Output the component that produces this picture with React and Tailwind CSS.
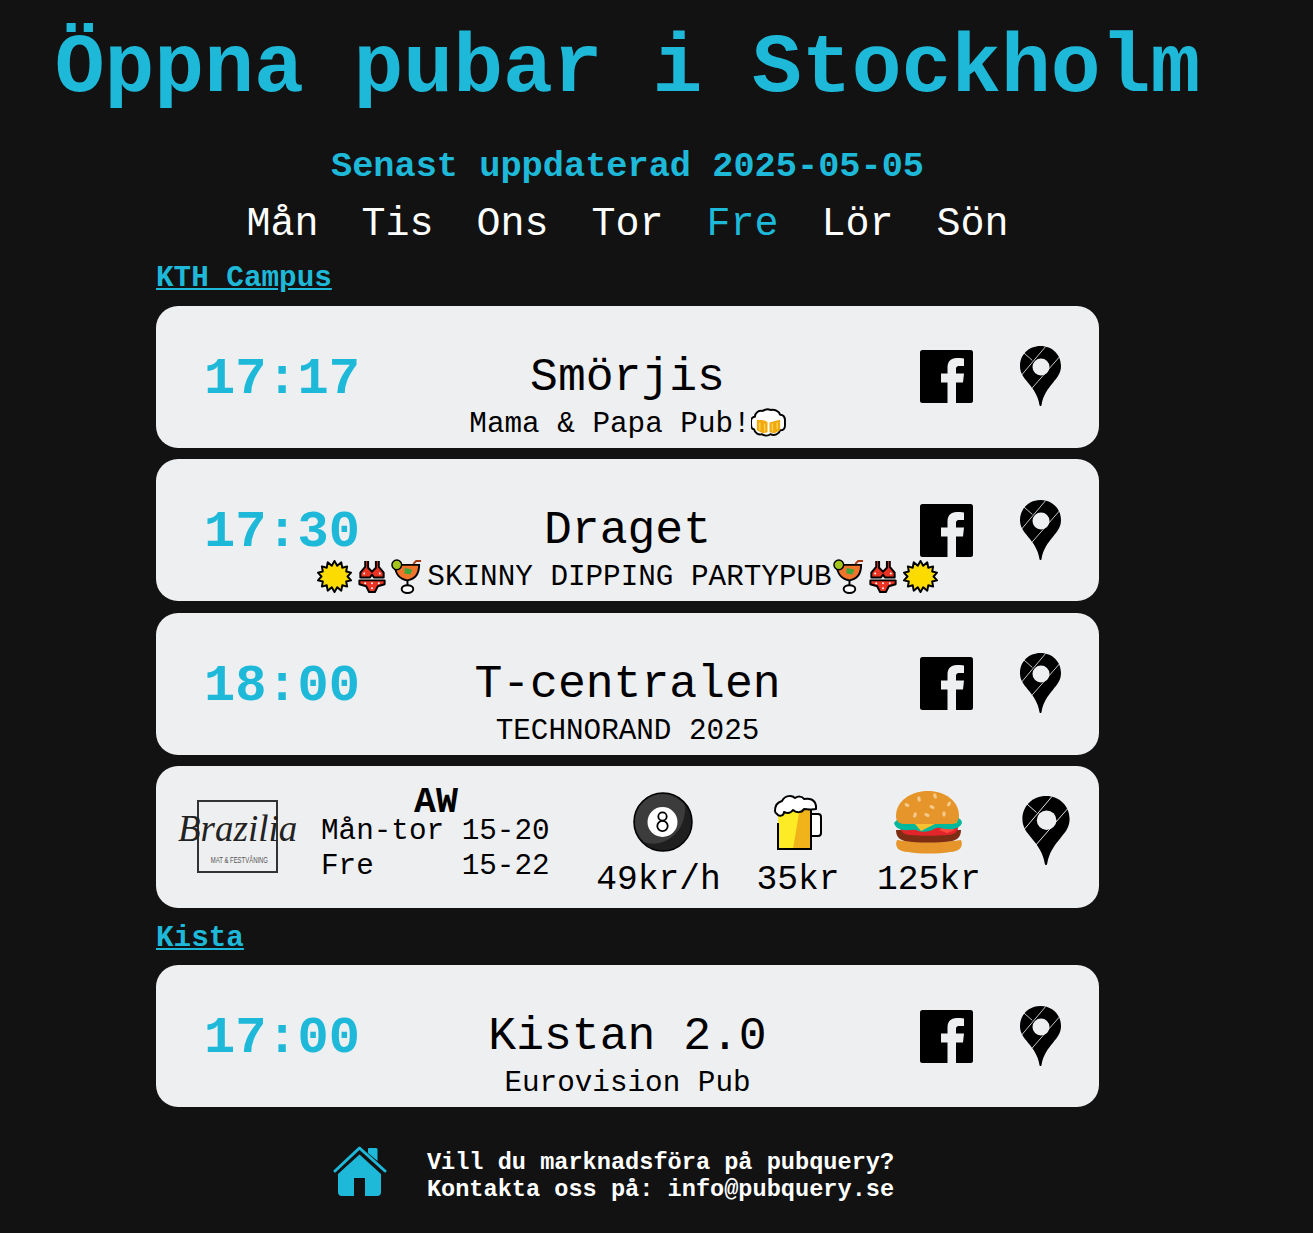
const mono = "font-['Courier_New','Nimbus_Mono_PS','FreeMono','Liberation_Mono',monospace]";

const days = ["Mån", "Tis", "Ons", "Tor", "Fre", "Lör", "Sön"];

const Sun = () => (
  <svg viewBox="0 0 36 36" className="w-[35px] h-[35px] shrink-0 -mt-[4px]">
    <polygon
      points="18,2 20.8,7 25,3.4 26,9 31,7.6 30,12.8 35,14 31.4,18 35,22 30,23.2 31,28.4 26,27 25,32.6 20.8,29 18,34 15.2,29 11,32.6 10,27 5,28.4 6,23.2 1,22 4.6,18 1,14 6,12.8 5,7.6 10,9 11,3.4 15.2,7"
      fill="#fcdc00"
      stroke="#000"
      strokeWidth="2"
      strokeLinejoin="round"
    />
  </svg>
);

const Bikini = () => (
  <svg viewBox="0 0 30 36" className="w-[30px] h-[35px] shrink-0 -mt-[4px]">
    <path d="M8 2v6L3 14v5h10l2-3 2 3h10v-5l-5-6V2" fill="#ea3323" stroke="#000" strokeWidth="2" strokeLinejoin="round" />
    <path d="M11 2v7l4 4 4-4V2" fill="#eeeff1" stroke="#000" strokeWidth="2" />
    <path d="M2 22h26v4l-7 2-3 6h-6l-3-6-7-2z" fill="#ea3323" stroke="#000" strokeWidth="2" strokeLinejoin="round" />
    <g fill="#fff">
      <circle cx="7" cy="15" r="1" />
      <circle cx="23" cy="15" r="1" />
      <circle cx="8" cy="25" r="1" />
      <circle cx="15" cy="25" r="1" />
      <circle cx="22" cy="25" r="1" />
      <circle cx="15" cy="30" r="1" />
    </g>
  </svg>
);

const Cocktail = () => (
  <svg viewBox="0 0 34 36" className="w-[33px] h-[35px] shrink-0 -mt-[4px]">
    <path d="M5 6h25c0 10-5 15-12 16C11 21 5 16 5 6z" fill="#f1742b" stroke="#000" strokeWidth="2" />
    <path d="M15 9l8 2-2 5-6-1z" fill="#3ca63a" />
    <circle cx="7" cy="6" r="5" fill="#a4c61c" stroke="#000" strokeWidth="1.5" />
    <path d="M24 5l3-3h5" fill="none" stroke="#a63a12" strokeWidth="2" />
    <path d="M18 22v6" stroke="#000" strokeWidth="2" />
    <ellipse cx="18" cy="31" rx="6" ry="4" fill="#fff" stroke="#000" strokeWidth="2" />
  </svg>
);

const Beers = () => (
  <svg viewBox="0 0 36 32" className="w-[35px] h-[31px] shrink-0 -mt-[3px]">
    <path d="M4 9c0-4 4-7 8-6 3-2 6-2 8-1 4-1 9 1 10 5 3 0 5 2 5 6v5c0 3-2 5-5 5-1 4-6 6-10 4-2 2-6 2-9 0-3 1-7-1-8-5-3 0-3-3-3-6v-3c0-2 2-4 4-4z" fill="#fff" stroke="#000" strokeWidth="2" strokeLinejoin="round" />
    <path d="M6 12c3 1 5 0 7 1 2 0 3 1 4 2v10l-5 1-6-3z" fill="#f1a90f" />
    <path d="M19 15c3-1 6-2 11-3v11l-6 3-5-1z" fill="#f1a90f" />
    <path d="M9 15v8M14 16v8M22 16v8M27 15v7" stroke="#fcd34d" strokeWidth="1.500" />
  </svg>
);

const Pin = ({ className }) => (
  <svg viewBox="1 1 40 58.500" className={className}>
    <path d="M21 1C9.500 1 1 9.500 1 20.500c0 7 3.500 11 8 16.500 5 6 9.500 12 11 21.500.3 1.500 1.700 1.500 2 0C23.500 49 28 43 33 37c4.500-5.500 8-9.500 8-16.500C41 9.500 32.500 1 21 1z" fill="#000" />
    <circle cx="21.500" cy="21.500" r="8.300" fill="#eeeff1" />
    <path d="M2 30L26 1.500M12 43L40 11M4.500 7.500l8.500 7.500" stroke="#eeeff1" strokeWidth="0.800" fill="none" />
  </svg>
);

const FacebookSquare = () => (
  <svg viewBox="0 0 53 53" className="w-[53px] h-[53px]">
    <rect width="53" height="53" rx="2.500" fill="#000" />
    <path d="M27.500 53V32.500H21v-9h6.500v-6c0-6 3.500-9.500 9-9.500 2.500 0 5 .2 7.500.4v7.600h-4.500c-3 0-3.500 1.500-3.500 3.500v4h8l-1 9h-7V53z" fill="#eeeff1" />
  </svg>
);

const EightBall = () => (
  <svg viewBox="0 0 60 60" className="w-[60px] h-[60px]">
    <circle cx="30" cy="30" r="29" fill="#1f1f1f" stroke="#000" strokeWidth="1.500" />
    <path d="M30 2C15 2 2 14 2 30c0 8 4 15 9 20 19 7 41-9 41-33 0-2 0-3-1-5C45 6 38 2 30 2z" fill="#3c3c3c" />
    <circle cx="29.500" cy="30" r="15" fill="#fff" />
    <circle cx="29.500" cy="24.500" r="4.200" fill="none" stroke="#000" strokeWidth="1.800" />
    <circle cx="29.500" cy="34" r="5.200" fill="none" stroke="#000" strokeWidth="1.800" />
  </svg>
);

const Beer = () => (
  <svg viewBox="0 0 50 58" className="w-[52px] h-[58px]">
    <path d="M38 21h7c2 0 3 1 3 3v16c0 2-1 3-3 3h-7" fill="#fff" stroke="#000" strokeWidth="2" />
    <path d="M5 14h33v42H5z" fill="#fdeb25" />
    <path d="M27 14h11v42H20z" fill="#f0b41a" />
    <path d="M5 30v26h33V14" fill="none" stroke="#000" strokeWidth="2" />
    <path d="M2 18c0-7 3-9 7-10 3-6 10-6 13-3 3-2 7-2 9 1 5-1 11 0 12 7v3c-5 1-9 0-12 0-2 4-8 4-11 1-3 4-7 3-9 2 0 4-5 5-7 2-2-1-2-2-2-3z" fill="#fff" stroke="#000" strokeWidth="2" strokeLinejoin="round" />
  </svg>
);

const Burger = () => (
  <svg viewBox="0 0 70 64" className="w-[70px] h-[64px]">
    <path d="M2 50c10 2 54 2 64 0 3 7-2 12-11 12-12 2-30 2-42 0C4 62-1 57 2 50z" fill="#e5952a" transform="translate(1 0)" />
    <path d="M2 40h65c0 7-4 10-9 11-14 2-34 2-47 0-5-1-9-4-9-11z" fill="#7c2d14" />
    <path d="M6 36h58c1 5-4 9-10 9-12 1-28 1-38 0-6 0-10-4-10-9z" fill="#e1252b" />
    <path d="M45 40l6-4 10 4-8 3z" fill="#ff4a3d" />
    <path d="M0 33c3-4 6-6 10-6h50c5 0 8 3 8 6-2 5-8 7-14 6-6 0-10-3-14 0-5 3-12 4-18 1-4-1-8 1-12 0-5 0-9-3-10-7z" fill="#00b89c" />
    <path d="M9 28h52l2 5-9 1-11-1-16 8-6-7z" fill="#fbc02d" />
    <path d="M2 26C2 11 17 1 34 1s31 10 31 25c0 6-4 8-8 8H10c-4 0-8-2-8-8z" fill="#e5952a" />
    <g fill="#f4c98a">
      <ellipse cx="25" cy="9" rx="1.700" ry="2.700" transform="rotate(-15 25 9)" />
      <ellipse cx="41" cy="6" rx="1.700" ry="2.700" transform="rotate(-20 41 6)" />
      <ellipse cx="13" cy="15" rx="2.700" ry="1.700" transform="rotate(30 13 15)" />
      <ellipse cx="38" cy="17" rx="2.700" ry="1.700" transform="rotate(25 38 17)" />
      <ellipse cx="55" cy="14" rx="1.700" ry="2.700" transform="rotate(30 55 14)" />
      <ellipse cx="21" cy="25" rx="1.700" ry="2.700" transform="rotate(20 21 25)" />
      <ellipse cx="33" cy="25" rx="2.700" ry="1.700" transform="rotate(20 33 25)" />
      <ellipse cx="50" cy="24" rx="1.700" ry="2.700" />
    </g>
  </svg>
);

const Home = () => (
  <svg viewBox="0 0 54 50" className="w-[54px] h-[50px]">
    <path d="M36 2h7a1.500 1.500 0 0 1 1.500 1.500V15L35 7V3a1 1 0 0 1 1-1z" fill="#1eb9d9" />
    <path d="M2 25L26.500 2 52 25" fill="none" stroke="#1eb9d9" strokeWidth="3" strokeLinecap="round" strokeLinejoin="round" />
    <path d="M26.500 8.500L5 28v18a4 4 0 0 0 4 4h12V32h11v18h12a4 4 0 0 0 4-4V28z" fill="#1eb9d9" />
  </svg>
);

const PubCard = ({ time, name, children }) => (
  <div className="grid grid-cols-[268px_minmax(0,1fr)_268px] items-center w-[943px] h-[142px] mb-[11.500px] bg-[#eeeff1] rounded-[22px] text-black">
    <div className="pl-12 pt-[6px] text-[52px] leading-none font-bold text-[#1eb9d9]">{time}</div>
    <div className="flex flex-col items-center pt-[40px]">
      <div className="text-[46.400px] leading-[52px] whitespace-pre">{name}</div>
      <div className="flex items-center justify-center h-[34px] mt-[4px] text-[29.300px] leading-[34px] whitespace-pre">{children}</div>
    </div>
    <div className="flex items-center justify-end gap-[47px] pr-[38px]">
      <FacebookSquare />
      <Pin className="w-[41px] h-[60px] -mt-[1px]" />
    </div>
  </div>
);

const Section = ({ children }) => (
  <a className="self-start text-[29.300px] leading-[33px] font-bold underline text-[#1eb9d9] mb-[11px]">{children}</a>
);

const Price = ({ icon, label, className }) => (
  <div className={`flex flex-col items-center pt-[16px] ${className}`}>
    <div className="h-[64px] flex items-center">{icon}</div>
    <div className="mt-[6px] text-[34.600px] leading-[40px] whitespace-pre">{label}</div>
  </div>
);

export default function App() {
  return (
    <div className={`${mono} min-h-[1233px] bg-[#121212] text-white`}>
      <div className="flex flex-col items-center w-[1255px]">
        <h1 className="text-[83px] leading-[94px] font-bold text-[#1eb9d9] mt-[22px] whitespace-pre">Öppna pubar i Stockholm</h1>
        <div className="text-[35.300px] leading-[40px] font-bold text-[#1eb9d9] mt-[31px]">Senast uppdaterad 2025-05-05</div>
        <div className="flex gap-[43px] text-[40px] leading-[45px] mt-[15px]">
          {days.map((d) => (
            <span key={d} className={d === "Fre" ? "text-[#1eb9d9]" : ""}>{d}</span>
          ))}
        </div>
        <div className="flex flex-col w-[943px] mt-[14.600px]">
          <Section>KTH Campus</Section>
          <PubCard time="17:17" name="Smörjis">
            Mama &amp; Papa Pub!<Beers />
          </PubCard>
          <PubCard time="17:30" name="Draget">
            <Sun />
            <span className="w-[5px]" />
            <Bikini />
            <span className="w-[3px]" />
            <Cocktail />
            <span className="ml-1">SKINNY DIPPING PARTYPUB</span>
            <Cocktail />
            <span className="w-[3px]" />
            <Bikini />
            <span className="w-[5px]" />
            <Sun />
          </PubCard>
          <PubCard time="18:00" name="T-centralen">TECHNORAND 2025</PubCard>

          <div className="flex items-center w-[943px] h-[142px] mb-[11.500px] bg-[#eeeff1] rounded-[22px] text-black">
            <div className="relative w-[119px] h-[74px] ml-[22px] shrink-0">
              <div className="absolute left-[19px] top-0 w-[81px] h-[73px] border-2 border-[#333]" />
              <div className="absolute left-0 top-[9px] text-[37px] leading-[40px] italic text-[#222] font-['Liberation_Serif',serif] whitespace-pre">Brazilia</div>
              <div className="absolute left-[19px] top-[55px] w-[81px] text-center text-[9px] leading-[10px] text-[#555] scale-x-[0.66] font-['Liberation_Sans',sans-serif] whitespace-pre">MAT &amp; FESTVÅNING</div>
            </div>
            <div className="ml-[24px] w-[232px] shrink-0 text-[29.300px] leading-[35px] whitespace-pre">
              <div className="font-bold text-center text-[36.600px] leading-[22px] pt-[2px] w-[230px]">AW</div>
              <div>Mån-tor 15-20</div>
              <div>Fre     15-22</div>
            </div>
            <Price className="ml-[43px] w-[125px]" icon={<span className="pl-2"><EightBall /></span>} label="49kr/h" />
            <Price className="ml-[35px] w-[84px]" icon={<Beer />} label="35kr" />
            <Price className="ml-[37px] w-[104px]" icon={<Burger />} label="125kr" />
            <Pin className="ml-[41px] w-[48px] h-[69px] -mt-[13px]" />
          </div>

          <div className="flex flex-col pt-[2px] -mb-[0.600px]">
            <Section>Kista</Section>
          </div>
          <PubCard time="17:00" name="Kistan 2.0">Eurovision Pub</PubCard>
        </div>
        <div className="flex items-start mt-[27.500px] mr-[28px]">
          <Home />
          <div className="ml-[40px] pt-[2.500px] text-[23.600px] leading-[27px] font-bold whitespace-pre">
            <div>Vill du marknadsföra på pubquery?</div>
            <div>Kontakta oss på: info@pubquery.se</div>
          </div>
        </div>
      </div>
    </div>
  );
}
